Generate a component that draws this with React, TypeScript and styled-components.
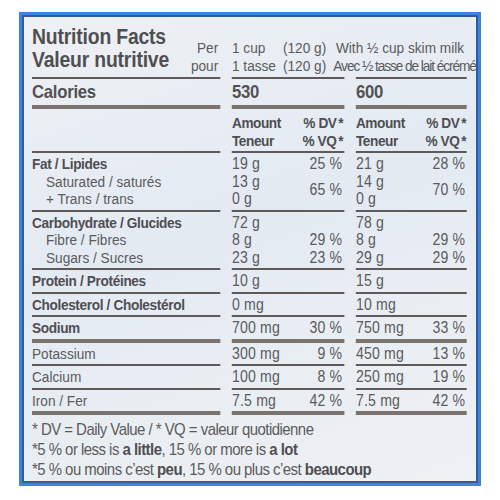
import React from "react";
import styled, { createGlobalStyle } from "styled-components";

type Rule = "thin" | "thick" | "none";

interface ILine {
  label: string;
  bold?: boolean;
  sub?: boolean;
}

interface IPct {
  text: string;
  row: number;
  span?: number;
}

interface ICol {
  amounts: string[];
  pcts: IPct[];
}

interface IGroup {
  lines: ILine[];
  cols: [ICol, ICol];
  rule: Rule;
}

// the label is set in a condensed face; we squeeze Arial-metric text to match
const S = 0.88;
const w = (px: number) => `${(px / S).toFixed(2)}px`;

const GlobalStyle = createGlobalStyle`
  html, body {
    margin: 0;
    background: #ffffff;
  }
  * {
    box-sizing: border-box;
  }
`;

const Page = styled.div`
  width: 500px;
  height: 500px;
  padding: 12px 19px 14px;
  font-family: "Liberation Sans", Arial, sans-serif;
  color: #5a5a5d;
`;

const Frame = styled.div`
  height: 100%;
  overflow: hidden;
  border: 3px solid #3c84dd;
  box-shadow: inset 0 0 0 2px #2f5c9f;
  background: linear-gradient(160deg, #eef1f5 0%, #e3eaf2 45%, #e9eef3 70%, #eef1f4 100%);
  padding: 10px 0 0 10px;
`;

const Condensed = styled.div`
  width: ${w(435)};
  transform: scaleX(${S});
  transform-origin: 0 0;
`;

const Grid = styled.div`
  display: grid;
  grid-template-columns: ${w(188)} ${w(112)} ${w(111)};
  column-gap: ${w(12)};
`;

const Cell = styled.div<{ $rule: Rule; $pad?: string }>`
  padding: ${(p) => p.$pad ?? "2px 0"};
  border-bottom: ${(p) =>
    p.$rule === "thick"
      ? "4px solid #7b736d"
      : p.$rule === "thin"
      ? "2px solid #5f5a59"
      : "none"};
`;

const Header = styled.div`
  display: flex;
  padding-bottom: 2.5px;
`;

const TitleBlock = styled.div`
  width: ${w(188)};
  flex: none;
  display: flex;
  justify-content: space-between;
`;

const Title = styled.div`
  font-size: 22px;
  line-height: 23px;
  font-weight: 700;
  letter-spacing: -0.2px;
  color: #4f4e52;
  white-space: nowrap;
`;

const PerPour = styled.div`
  padding-top: 13.5px;
  padding-right: 2px;
  text-align: right;
  font-size: 15.5px;
  line-height: 18px;
`;

const Serving = styled.div`
  margin-left: ${w(12)};
  padding-top: 13.5px;
  display: grid;
  grid-template-columns: ${w(51)} ${w(53)} auto;
  font-size: 15.5px;
  line-height: 18px;
  white-space: nowrap;
`;

const Squeezed = styled.span`
  letter-spacing: -1.2px;
  margin-left: -3px;
`;

const CaloriesText = styled.div`
  font-size: 19px;
  line-height: 26px;
  font-weight: 700;
  letter-spacing: -0.3px;
  color: #525155;
`;

const Label = styled.div<{ $bold?: boolean; $sub?: boolean }>`
  font-size: 15.5px;
  line-height: 17.5px;
  font-weight: ${(p) => (p.$bold ? 700 : 400)};
  letter-spacing: ${(p) => (p.$bold ? "-0.4px" : "0")};
  padding-left: ${(p) => (p.$sub ? w(14) : "0")};
  color: ${(p) => (p.$bold ? "#4f4e52" : "#5a5a5d")};
  white-space: nowrap;
`;

const ValueGrid = styled.div<{ $rows: number }>`
  display: grid;
  grid-template-columns: 1fr auto;
  grid-template-rows: repeat(${(p) => p.$rows}, 17.5px);
  font-size: 16px;
  line-height: 17.5px;
  letter-spacing: 0.2px;
`;

const Amount = styled.div<{ $row: number }>`
  grid-column: 1;
  grid-row: ${(p) => p.$row};
`;

const Pct = styled.div<{ $row: number; $span: number }>`
  grid-column: 2;
  grid-row: ${(p) => p.$row} / span ${(p) => p.$span};
  align-self: center;
  text-align: right;
  padding-right: 2px;
`;

const HeadRow = styled.div`
  display: flex;
  justify-content: space-between;
  font-size: 15.5px;
  line-height: 17.5px;
  font-weight: 700;
  letter-spacing: -0.5px;
  color: #4f4e52;
  padding-right: 1px;
`;

const Star = styled.span`
  margin-left: 2px;
`;

const Notes = styled.div`
  padding-top: 5px;
  font-size: 17px;
  line-height: 20px;
  letter-spacing: -0.6px;
  color: #5b5b5e;
  white-space: nowrap;
  b {
    color: #4f4e52;
  }
`;

const groups: IGroup[] = [
  {
    lines: [
      { label: "Fat / Lipides", bold: true },
      { label: "Saturated / saturés", sub: true },
      { label: "+ Trans / trans", sub: true },
    ],
    cols: [
      { amounts: ["19 g", "13 g", "0 g"], pcts: [{ text: "25 %", row: 1 }, { text: "65 %", row: 2, span: 2 }] },
      { amounts: ["21 g", "14 g", "0 g"], pcts: [{ text: "28 %", row: 1 }, { text: "70 %", row: 2, span: 2 }] },
    ],
    rule: "thin",
  },
  {
    lines: [
      { label: "Carbohydrate / Glucides", bold: true },
      { label: "Fibre / Fibres", sub: true },
      { label: "Sugars / Sucres", sub: true },
    ],
    cols: [
      { amounts: ["72 g", "8 g", "23 g"], pcts: [{ text: "29 %", row: 2 }, { text: "23 %", row: 3 }] },
      { amounts: ["78 g", "8 g", "29 g"], pcts: [{ text: "29 %", row: 2 }, { text: "29 %", row: 3 }] },
    ],
    rule: "thin",
  },
  {
    lines: [{ label: "Protein / Protéines", bold: true }],
    cols: [
      { amounts: ["10 g"], pcts: [] },
      { amounts: ["15 g"], pcts: [] },
    ],
    rule: "thin",
  },
  {
    lines: [{ label: "Cholesterol / Cholestérol", bold: true }],
    cols: [
      { amounts: ["0 mg"], pcts: [] },
      { amounts: ["10 mg"], pcts: [] },
    ],
    rule: "thin",
  },
  {
    lines: [{ label: "Sodium", bold: true }],
    cols: [
      { amounts: ["700 mg"], pcts: [{ text: "30 %", row: 1 }] },
      { amounts: ["750 mg"], pcts: [{ text: "33 %", row: 1 }] },
    ],
    rule: "thick",
  },
  {
    lines: [{ label: "Potassium" }],
    cols: [
      { amounts: ["300 mg"], pcts: [{ text: "9 %", row: 1 }] },
      { amounts: ["450 mg"], pcts: [{ text: "13 %", row: 1 }] },
    ],
    rule: "thin",
  },
  {
    lines: [{ label: "Calcium" }],
    cols: [
      { amounts: ["100 mg"], pcts: [{ text: "8 %", row: 1 }] },
      { amounts: ["250 mg"], pcts: [{ text: "19 %", row: 1 }] },
    ],
    rule: "thin",
  },
  {
    lines: [{ label: "Iron / Fer" }],
    cols: [
      { amounts: ["7.5 mg"], pcts: [{ text: "42 %", row: 1 }] },
      { amounts: ["7.5 mg"], pcts: [{ text: "42 %", row: 1 }] },
    ],
    rule: "thick",
  },
];

const GroupRow = ({ group }: { group: IGroup }) => (
  <Grid>
    <Cell $rule={group.rule}>
      {group.lines.map((l) => (
        <Label key={l.label} $bold={l.bold} $sub={l.sub}>
          {l.label}
        </Label>
      ))}
    </Cell>
    {group.cols.map((col, i) => (
      <Cell key={i} $rule={group.rule}>
        <ValueGrid $rows={group.lines.length}>
          {col.amounts.map((a, r) => (
            <Amount key={r} $row={r + 1}>
              {a}
            </Amount>
          ))}
          {col.pcts.map((p) => (
            <Pct key={p.row} $row={p.row} $span={p.span ?? 1}>
              {p.text}
            </Pct>
          ))}
        </ValueGrid>
      </Cell>
    ))}
  </Grid>
);

const App = () => {
  return (
    <Page>
      <GlobalStyle />
      <Frame>
        <Condensed>
          <Header>
            <TitleBlock>
              <Title>
                Nutrition Facts
                <br />
                Valeur nutritive
              </Title>
              <PerPour>
                Per
                <br />
                pour
              </PerPour>
            </TitleBlock>
            <Serving>
              <span>1 cup</span>
              <span>(120 g)</span>
              <span>With ½ cup skim milk</span>
              <span>1 tasse</span>
              <span>(120 g)</span>
              <Squeezed>Avec ½ tasse de lait écrémé</Squeezed>
            </Serving>
          </Header>

          <Grid>
            <Cell $rule="thin" $pad="0" />
            <Cell $rule="thin" $pad="0" />
            <Cell $rule="thin" $pad="0" />
          </Grid>

          <Grid>
            <Cell $rule="thick" $pad="0">
              <CaloriesText>Calories</CaloriesText>
            </Cell>
            <Cell $rule="thick" $pad="0">
              <CaloriesText>530</CaloriesText>
            </Cell>
            <Cell $rule="thick" $pad="0">
              <CaloriesText>600</CaloriesText>
            </Cell>
          </Grid>

          <Grid>
            <Cell $rule="thin" $pad="5px 0 2px" />
            {[0, 1].map((i) => (
              <Cell key={i} $rule="thin" $pad="5px 0 2px">
                <HeadRow>
                  <span>Amount</span>
                  <span>
                    % DV<Star>*</Star>
                  </span>
                </HeadRow>
                <HeadRow>
                  <span>Teneur</span>
                  <span>
                    % VQ<Star>*</Star>
                  </span>
                </HeadRow>
              </Cell>
            ))}
          </Grid>

          {groups.map((g) => (
            <GroupRow key={g.lines[0].label} group={g} />
          ))}

          <Notes>
            * DV = Daily Value / * VQ = valeur quotidienne
            <br />
            *5 % or less is <b>a little</b>, 15 % or more is <b>a lot</b>
            <br />
            *5 % ou moins c’est <b>peu</b>, 15 % ou plus c’est <b>beaucoup</b>
          </Notes>
        </Condensed>
      </Frame>
    </Page>
  );
};

export default App;
